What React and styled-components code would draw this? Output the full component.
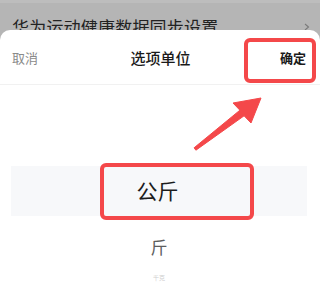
import React from "react";
import styled, { createGlobalStyle } from "styled-components";

const GlobalStyle = createGlobalStyle`
  html, body {
    margin: 0;
    padding: 0;
    background: #b5b5b5;
  }
  body {
    font-family: "Noto Sans CJK SC", "Noto Sans", sans-serif;
  }
`;

const options = [
  { label: "公斤", selected: true },
  { label: "斤" },
  { label: "千克", faint: true },
];

const App = () => {
  return (
    <>
      <GlobalStyle />
      <Page>
        <BackdropRow>
          <BackdropText>华为运动健康数据同步设置</BackdropText>
          <Chevron viewBox="0 0 6 8">
            <path d="M1 1 L4.5 4 L1 7" />
          </Chevron>
        </BackdropRow>

        <Sheet>
          <Header>
            <Cancel>取消</Cancel>
            <Title>选项单位</Title>
            <Confirm>确定</Confirm>
          </Header>

          <Picker>
            {options.map((o) =>
              o.selected ? (
                <SelectedBand key={o.label}>
                  <SelectedText>{o.label}</SelectedText>
                </SelectedBand>
              ) : (
                <Option key={o.label} $faint={o.faint}>
                  {o.label}
                </Option>
              )
            )}
          </Picker>
        </Sheet>

        <Highlight $left={244} $top={38} $width={72} $height={45} />
        <Highlight $left={100} $top={163} $width={154} $height={57} />
        <Arrow viewBox="0 0 320 283">
          <polygon points="194.1,147.8 239.9,110.2 233,103 261,98 251,123 244.1,115.8 195.9,150.2" />
        </Arrow>
      </Page>
    </>
  );
};

export default App;

const Page = styled.div`
  position: relative;
  width: 320px;
  height: 283px;
  overflow: hidden;
  display: flex;
  flex-direction: column;
  background: #b5b5b5;
`;

const BackdropRow = styled.div`
  height: 27px;
  border-top: 3px solid #bdbdbd;
  padding: 0 12px;
  display: flex;
  align-items: flex-start;
  justify-content: space-between;
  overflow: hidden;
`;

const BackdropText = styled.div`
  margin-top: 14px;
  font-size: 17px;
  line-height: 20px;
  color: #222;
  letter-spacing: 0.2px;
`;

const Chevron = styled.svg`
  width: 6px;
  height: 8px;
  margin-top: 20px;
  margin-right: -2px;
  fill: none;
  stroke: #7a7a7a;
  stroke-width: 1.1;
`;

const Sheet = styled.div`
  flex: 1;
  background: #fff;
  border-radius: 10px 10px 0 0;
  display: flex;
  flex-direction: column;
`;

const Header = styled.div`
  height: 54px;
  padding: 0 12px;
  display: flex;
  align-items: center;
  justify-content: space-between;
  border-bottom: 1px solid #f1f1f1;
`;

const Cancel = styled.span`
  font-size: 13px;
  color: #8a8a8a;
  width: 60px;
`;

const Title = styled.span`
  font-size: 15px;
  color: #1a1a1a;
  font-weight: 500;
  margin-left: 3px;
`;

const Confirm = styled.span`
  font-size: 13px;
  color: #1a1a1a;
  font-weight: 700;
  width: 60px;
  text-align: right;
  margin-right: 2px;
`;

const Picker = styled.div`
  padding-top: 81px;
  display: flex;
  flex-direction: column;
  align-items: center;
`;

const SelectedBand = styled.div`
  align-self: stretch;
  margin: 0 13px 0 11px;
  height: 50px;
  background: #f7f8fa;
  display: flex;
  align-items: center;
  justify-content: center;
`;

const SelectedText = styled.span`
  font-size: 21px;
  color: #1c1c1c;
  margin-left: -3px;
  margin-top: -3px;
`;

const Option = styled.div`
  margin-top: ${(p) => (p.$faint ? "17px" : "21px")};
  font-size: ${(p) => (p.$faint ? "6px" : "17px")};
  line-height: ${(p) => (p.$faint ? "8px" : "20px")};
  color: ${(p) => (p.$faint ? "#cfcfcf" : "#5e5e5e")};
  margin-left: -2px;
`;

const Highlight = styled.div`
  position: absolute;
  left: ${(p) => p.$left}px;
  top: ${(p) => p.$top}px;
  width: ${(p) => p.$width}px;
  height: ${(p) => p.$height}px;
  box-sizing: border-box;
  border: 4px solid #f4484a;
  border-radius: 6px;
`;

const Arrow = styled.svg`
  position: absolute;
  left: 0;
  top: 0;
  width: 320px;
  height: 283px;
  fill: #f4484a;
  stroke: #f4484a;
  stroke-width: 1;
  stroke-linejoin: round;
  pointer-events: none;
`;
